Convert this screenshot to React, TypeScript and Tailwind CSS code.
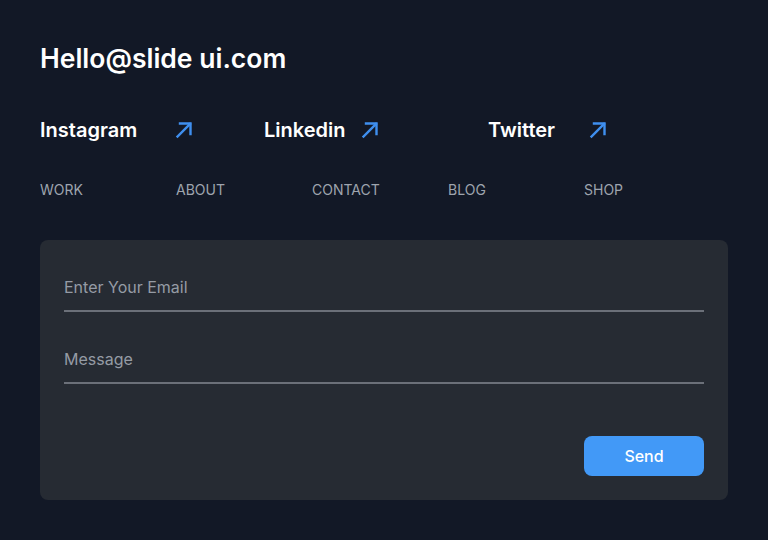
import React, { useState } from 'react';

const Arrow: React.FC = () => (
  <svg width="18" height="18" viewBox="0 0 18 18" fill="none" stroke="#3f8fef" strokeWidth="2.4" strokeLinecap="square">
    <path d="M2.5 15.5 L15 3" />
    <path d="M5 2.5 H15.5 V13" />
  </svg>
);

const socials = [
  { name: 'Instagram', gap: 'ml-[38px]' },
  { name: 'Linkedin', gap: 'ml-[15px]' },
  { name: 'Twitter', gap: 'ml-[34px]' },
];

const links = ['WORK', 'ABOUT', 'CONTACT', 'BLOG', 'SHOP'];

const App: React.FC = () => {
  const [email, setEmail] = useState('');
  const [message, setMessage] = useState('');

  return (
    <div className="min-h-screen w-full bg-[#121826] px-10 pt-[42px] pb-10 font-['Inter',sans-serif]">
      <h1 className="text-[26.5px] leading-8 font-semibold text-white">Hello@slide ui.com</h1>

      <div className="mt-[42px] grid grid-cols-[repeat(3,224px)]">
        {socials.map((s) => (
          <a key={s.name} href="#" className="flex items-center h-7">
            <span className="text-[20px] font-semibold text-white">{s.name}</span>
            <span className={s.gap}>
              <Arrow />
            </span>
          </a>
        ))}
      </div>

      <nav className="mt-9 grid grid-cols-[repeat(5,136px)]">
        {links.map((l) => (
          <a key={l} href="#" className="text-sm leading-5 text-[#9ea4ae]">
            {l}
          </a>
        ))}
      </nav>

      <form
        className="mt-10 bg-[#262b33] rounded-lg p-6 flex flex-col"
        onSubmit={(e) => e.preventDefault()}
      >
        <input
          type="email"
          value={email}
          onChange={(e) => setEmail(e.target.value)}
          placeholder="Enter Your Email"
          className="h-12 w-full bg-transparent border-b-2 border-[#6b7079] text-base text-white placeholder:text-[#959ba5] outline-none"
        />
        <input
          type="text"
          value={message}
          onChange={(e) => setMessage(e.target.value)}
          placeholder="Message"
          className="mt-6 h-12 w-full bg-transparent border-b-2 border-[#6b7079] text-base text-white placeholder:text-[#959ba5] outline-none"
        />
        <div className="mt-[52px] flex justify-end">
          <button type="submit" className="w-[120px] h-10 rounded-lg bg-[#4299f7] text-white text-base font-medium">
            Send
          </button>
        </div>
      </form>
    </div>
  );
};

export default App;
